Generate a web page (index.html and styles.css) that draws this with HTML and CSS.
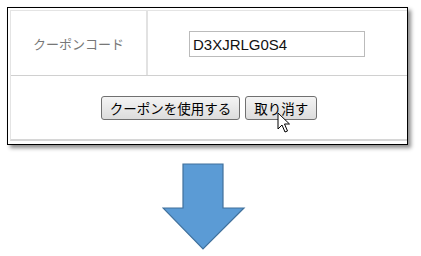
FILE: index.html
```html
<!DOCTYPE html>
<html lang="ja">
<head>
	<meta charset="UTF-8">
	<title>クーポン</title>
	<link rel="stylesheet" href="styles.css">
</head>
<body>
	<div class="frame">
		<div class="panel">
			<div class="row">
				<div class="label">クーポンコード</div>
				<div class="field">
					<input type="text" class="code" value="D3XJRLG0S4">
				</div>
			</div>
			<div class="row act">
				<button class="btn">クーポンを使用する</button>
				<button class="btn">取り消す</button>
				<svg class="cursor" width="14" height="22" viewBox="0 0 14 22">
					<path d="M1 1 L1 17 L5 13 L8 20 L10.5 19 L7.5 12 L12.5 12 Z" fill="#fff" stroke="#000" stroke-width="1" stroke-linejoin="round"/>
				</svg>
			</div>
		</div>
	</div>
	<svg class="arrow" width="84" height="90" viewBox="0 0 84 90">
		<polygon points="21,1 61,1 61,45 82,45 41,86 1,45 21,45" fill="#5b9bd5" stroke="#41719c" stroke-width="1.2"/>
	</svg>
</body>
</html>
```
FILE: styles.css
```css
body {
	margin: 0;
	background: #fff;
	font-family: "Liberation Sans", "Noto Sans CJK JP", sans-serif;
}

.frame {
	box-sizing: border-box;
	width: 401px;
	height: 138px;
	margin: 7px 0 0 7px;
	padding: 2px 0 3px 2px;
	border: 1px solid #000;
	box-shadow: 3px 3px 4px rgba(0, 0, 0, 0.45);
	background: #fff;
}

.panel {
	display: flex;
	flex-direction: column;
	height: 100%;
	border-top: 1px solid #e4e4e4;
	border-left: 1px solid #e4e4e4;
	border-bottom: 2px solid #d6d6d6;
	box-sizing: border-box;
}

.row {
	display: flex;
	height: 64px;
	border-bottom: 1px solid #d0d0d0;
}

.label {
	display: flex;
	width: 135px;
	align-items: center;
	justify-content: center;
	border-right: 2px solid #e2e2e2;
	color: #777;
	font-size: 13px;
	font-family: "Noto Sans CJK JP", sans-serif;
}

.field {
	padding: 20px 0 0 41px;
}

.code {
	box-sizing: border-box;
	width: 176px;
	height: 26px;
	margin: 0;
	padding: 0 3px;
	border: 1px solid #bbb;
	font-family: "Liberation Sans", sans-serif;
	font-size: 15px;
	color: #111;
}

.act {
	position: relative;
	flex: 1;
	border-bottom: none;
	justify-content: center;
	align-items: flex-start;
	gap: 5px;
	padding-top: 20px;
}

.btn {
	height: 24px;
	margin: 0;
	padding: 0 8px;
	border: 1px solid #707070;
	border-radius: 3px;
	background: linear-gradient(#f4f4f4, #dcdcdc);
	font-family: "Noto Sans CJK JP", sans-serif;
	font-size: 13.5px;
	color: #000;
}

.cursor {
	position: absolute;
	left: 266px;
	top: 36px;
}

.arrow {
	display: block;
	margin: 18px 0 0 162px;
}
```
